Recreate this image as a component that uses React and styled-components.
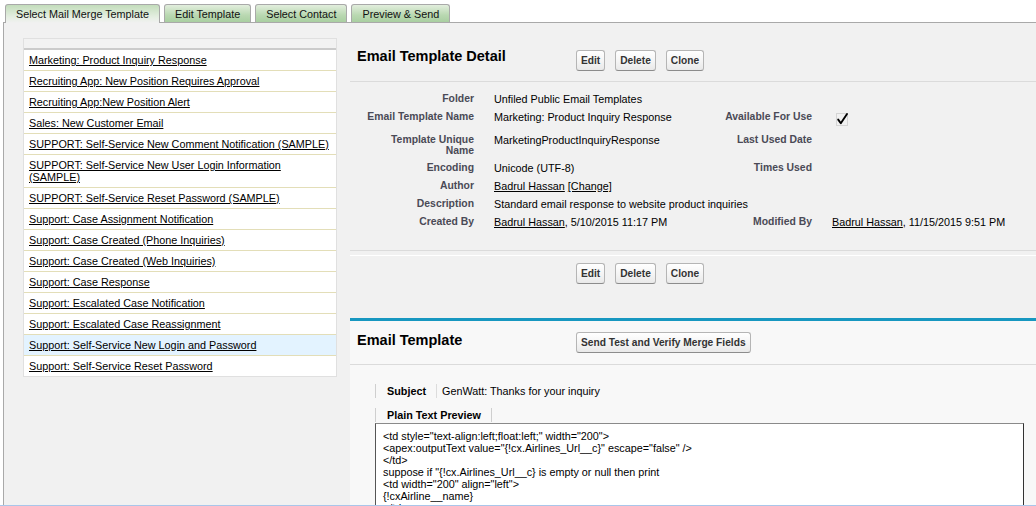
import styled, {createGlobalStyle} from "styled-components"

const GlobalStyle = createGlobalStyle`
  html, body {
    margin: 0;
    padding: 0;
    background: #fff;
    overflow: hidden;
  }
  body {
    font-family: "Liberation Sans", Arial, sans-serif;
    color: #000;
  }
`

const Page = styled.div`
  height: 506px;
  box-sizing: border-box;
  border-bottom: 1px solid #a9c6ea;
  overflow: hidden;
  display: flex;
  flex-direction: column;
`

const TabBar = styled.div`
  display: flex;
  align-items: flex-end;
  gap: 4px;
  padding: 4px 0 0 5px;
`

const Tab = styled.div`
  position: relative;
  z-index: 1;
  box-sizing: border-box;
  height: ${props => props.active ? "19px" : "18px"};
  margin-bottom: ${props => props.active ? "-1px" : "0"};
  padding: 0 10px;
  border: 1px solid #a9a9a9;
  border-bottom: none;
  border-radius: 3px 3px 0 0;
  font-size: 10.8px;
  line-height: 18px;
  color: #111;
  background: ${props => props.active
    ? "linear-gradient(#c3ddbb, #e6efe3 70%, #f1f1f1)"
    : "linear-gradient(#e2eedd, #b9d8b1 60%, #a9cfa1)"};
`

const Content = styled.div`
  flex: 1;
  display: flex;
  align-items: flex-start;
  gap: 13px;
  margin-left: 3px;
  padding: 15px 0 0 19px;
  border-top: 1px solid #a9a9a9;
  border-left: 1px solid #a9a9a9;
  background: #f1f1f1;
`

const TemplateList = styled.div`
  flex: none;
  width: 314px;
  box-sizing: border-box;
  border: 1px solid #e0e0e0;
  background: #fff;
`

const ListHead = styled.div`
  height: 9px;
  background: #f2f2f2;
  border-bottom: 2px solid #cbcbcb;
`

const ListRow = styled.div`
  padding: 4px 2px 4px 5px;
  font-size: 10.8px;
  line-height: 12px;
  border-bottom: 1px solid #e3deb8;
  background: ${props => props.selected ? "#e3f3ff" : "#fff"};

  &:last-child {
    border-bottom: none;
  }
`

const Link = styled.a`
  color: #000;
  text-decoration: underline;
  cursor: pointer;
`

const RightColumn = styled.div`
  flex: 1;
  min-width: 0;
`

const Header = styled.div`
  display: flex;
  align-items: flex-start;
  height: 44px;
  box-sizing: border-box;
  padding-top: ${props => props.top || "9px"};
  border-bottom: 1px solid #dbdbdb;
`

const Title = styled.h2`
  margin: 0;
  width: 219px;
  padding-left: 7px;
  font-size: 14.5px;
  line-height: 18px;
  font-weight: bold;
  color: #000;
`

const ButtonGroup = styled.div`
  display: flex;
  gap: 10px;
  margin-top: ${props => props.offset || "0"};
`

const Button = styled.button`
  height: 21px;
  padding: 0 4px;
  font-family: "Liberation Sans", Arial, sans-serif;
  font-size: 10.2px;
  font-weight: bold;
  color: #333;
  border: 1px solid #b5b5b5;
  border-bottom-color: #8c8c8c;
  border-radius: 3px;
  background: linear-gradient(#ffffff, #f4f4f4 55%, #e9e9e9);
  cursor: pointer;
`

const DetailGrid = styled.div`
  display: grid;
  grid-template-columns: 110px 200px 98px 1fr;
  column-gap: 20px;
  padding: 8px 0 19px 14px;
  border-bottom: 1px solid #dbdbdb;
`

const Label = styled.div`
  padding: 3px 0;
  text-align: right;
  font-size: 10.4px;
  line-height: 11px;
  font-weight: bold;
  color: #4a4a56;
`

const Value = styled.div`
  padding: 3px 0;
  font-size: 10.8px;
  line-height: 12px;
  color: #000;
  white-space: nowrap;
  grid-column: ${props => props.wide ? "span 3" : "auto"};
`

const CheckIcon = styled.svg`
  display: block;
  margin-left: 4px;
`

const DetailFooter = styled.div`
  margin-top: 4px;
  padding: 7px 0 34px 226px;
  border-top: 1px solid #fff;
`

const EmailSection = styled.div`
  border-top: 3px solid #1797c0;
  background: #f8f8f8;
`

const EmailBody = styled.div`
  padding: 19px 12px 0 25px;
`

const SubjectRow = styled.div`
  display: flex;
  font-size: 10.8px;
  line-height: 14px;
`

const SubjectLabel = styled.div`
  padding: 0 10px 0 11px;
  border-left: 1px solid #cfcfcf;
  border-right: 1px solid #dcdcdc;
  font-weight: bold;
`

const SubjectValue = styled.div`
  padding-left: 5px;
`

const PreviewTab = styled.div`
  display: inline-block;
  margin-top: 10px;
  padding: 0 10px 0 11px;
  border-left: 1px solid #cfcfcf;
  border-right: 1px solid #cfcfcf;
  font-size: 10.8px;
  line-height: 14px;
  font-weight: bold;
`

const PreviewBox = styled.div`
  height: 200px;
  padding: 6px 7px;
  background: #fff;
  border: 1px solid #333;
  border-top-color: #8a8a8a;
  border-left-color: #555;
  font-size: 10.8px;
  line-height: 12px;
  white-space: pre;
  overflow: hidden;
`

const tabs = ["Select Mail Merge Template", "Edit Template", "Select Contact", "Preview & Send"]

const templates = [
  "Marketing: Product Inquiry Response",
  "Recruiting App: New Position Requires Approval",
  "Recruiting App:New Position Alert",
  "Sales: New Customer Email",
  "SUPPORT: Self-Service New Comment Notification (SAMPLE)",
  "SUPPORT: Self-Service New User Login Information (SAMPLE)",
  "SUPPORT: Self-Service Reset Password (SAMPLE)",
  "Support: Case Assignment Notification",
  "Support: Case Created (Phone Inquiries)",
  "Support: Case Created (Web Inquiries)",
  "Support: Case Response",
  "Support: Escalated Case Notification",
  "Support: Escalated Case Reassignment",
  "Support: Self-Service New Login and Password",
  "Support: Self-Service Reset Password"
]

const previewText = `<td style="text-align:left;float:left;" width="200">
<apex:outputText value="{!cx.Airlines_Url__c}" escape="false" />
</td>
suppose if "{!cx.Airlines_Url__c} is empty or null then print
<td width="200" align="left">
{!cxAirline__name}
</td>`

const Check = () => (
  <CheckIcon width="16" height="17" viewBox="0 0 16 17">
    <rect x="0.5" y="2.5" width="11" height="12" fill="none" stroke="#b8b8b8" strokeWidth="1" strokeDasharray="1 1"/>
    <path d="M2.2 8.6 L4.8 12.2 L11 3" fill="none" stroke="#000" strokeWidth="1.9" strokeLinecap="round" strokeLinejoin="round"/>
  </CheckIcon>
)

const ActionButtons = ({offset}) => (
  <ButtonGroup offset={offset}>
    <Button>Edit</Button>
    <Button>Delete</Button>
    <Button>Clone</Button>
  </ButtonGroup>
)

const App = () => {
  return (
    <Page>
      <GlobalStyle/>
      <TabBar>
        {tabs.map((t, i) => <Tab key={t} active={i === 0}>{t}</Tab>)}
      </TabBar>
      <Content>
        <TemplateList>
          <ListHead/>
          {templates.map(t => (
            <ListRow key={t} selected={t === "Support: Self-Service New Login and Password"}>
              <Link>{t}</Link>
            </ListRow>
          ))}
        </TemplateList>
        <RightColumn>
          <Header>
            <Title>Email Template Detail</Title>
            <ActionButtons offset="3px"/>
          </Header>
          <DetailGrid>
            <Label>Folder</Label>
            <Value>Unfiled Public Email Templates</Value>
            <Label/>
            <Value/>

            <Label>Email Template Name</Label>
            <Value>Marketing: Product Inquiry Response</Value>
            <Label>Available For Use</Label>
            <Value><Check/></Value>

            <Label>Template Unique Name</Label>
            <Value>MarketingProductInquiryResponse</Value>
            <Label>Last Used Date</Label>
            <Value/>

            <Label>Encoding</Label>
            <Value>Unicode (UTF-8)</Value>
            <Label>Times Used</Label>
            <Value/>

            <Label>Author</Label>
            <Value><Link>Badrul Hassan</Link> <Link>[Change]</Link></Value>
            <Label/>
            <Value/>

            <Label>Description</Label>
            <Value wide>Standard email response to website product inquiries</Value>

            <Label>Created By</Label>
            <Value><Link>Badrul Hassan</Link>, 5/10/2015 11:17 PM</Value>
            <Label>Modified By</Label>
            <Value><Link>Badrul Hassan</Link>, 11/15/2015 9:51 PM</Value>
          </DetailGrid>
          <DetailFooter>
            <ActionButtons/>
          </DetailFooter>
          <EmailSection>
            <Header top="10px">
              <Title>Email Template</Title>
              <ButtonGroup offset="1px">
                <Button>Send Test and Verify Merge Fields</Button>
              </ButtonGroup>
            </Header>
            <EmailBody>
              <SubjectRow>
                <SubjectLabel>Subject</SubjectLabel>
                <SubjectValue>GenWatt: Thanks for your inquiry</SubjectValue>
              </SubjectRow>
              <PreviewTab>Plain Text Preview</PreviewTab>
              <PreviewBox>{previewText}</PreviewBox>
            </EmailBody>
          </EmailSection>
        </RightColumn>
      </Content>
    </Page>
  )
}

export default App
